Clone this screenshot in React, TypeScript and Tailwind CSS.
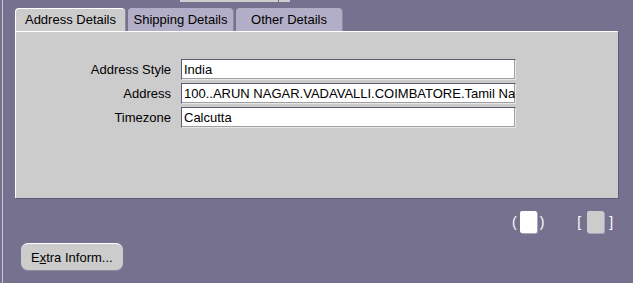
import React from "react";

const tabs = [
  { label: "Address Details", width: "w-[110px]", active: true },
  { label: "Shipping Details", width: "w-[105px]", active: false },
  { label: "Other Details", width: "w-[106px]", active: false },
];

const fields = [
  { label: "Address Style", value: "India" },
  { label: "Address", value: "100..ARUN NAGAR.VADAVALLI.COIMBATORE.Tamil Nadu" },
  { label: "Timezone", value: "Calcutta" },
];

export default function App() {
  return (
    <div className="h-[283px] w-[633px] overflow-hidden bg-[#777190] pl-[2px] font-['Liberation_Sans',Arial,sans-serif] text-[13px] text-black">
      <div className="flex h-full flex-col border-l border-[#c9c7d2]">
        {/* cut-off control from the region above */}
        <div className="flex h-[2px]">
          <div className="ml-[177px] w-[98px] bg-[#cfcfcf]" />
          <div className="ml-px w-[11px] bg-[#cfcfcf]" />
        </div>

        <div className="ml-[12px] mt-[6px] flex h-[23px] items-end gap-[3px]">
          {tabs.map((tab) => (
            <div
              key={tab.label}
              className={`flex h-[23px] ${tab.width} items-center justify-center rounded-t-[4px] pb-px leading-none ${
                tab.active
                  ? "border-l border-t border-white bg-[#cccccc] shadow-[1px_0_0_#8e8a9f]"
                  : "mt-px bg-[#b3aec7] shadow-[1px_0_0_#8e8a9f]"
              }`}
            >
              {tab.label}
            </div>
          ))}
        </div>

        <div className="ml-[12px] h-[167px] w-[603px] border-l border-t border-white bg-[#cccccc] shadow-[1px_1px_0_#5f5a75]">
          <div className="mt-[27px] grid grid-cols-[155px_335px] gap-x-[10px] gap-y-[3px]">
            {fields.map((field) => (
              <React.Fragment key={field.label}>
                <div className="flex h-[21px] items-center justify-end leading-none">{field.label}</div>
                <div className="flex h-[21px] items-center overflow-hidden whitespace-nowrap border-b border-l border-r border-t border-b-[#e6e6e6] border-l-[#5e587a] border-r-[#e6e6e6] border-t-[#5e587a] bg-white pl-[2px] leading-none shadow-[inset_-1px_-1px_0_#9f9f9f]">
                  {field.value}
                </div>
              </React.Fragment>
            ))}
          </div>
        </div>

        <div className="mt-[13px] flex h-[22px] items-center text-white">
          <span className="ml-[509px] text-[14px] leading-none">(</span>
          <div className="ml-[3px] h-[22px] w-[17px] rounded-[2px] bg-white shadow-[1px_1px_0_#a9a5bb]" />
          <span className="ml-[3px] text-[14px] leading-none">)</span>
          <span className="ml-[33px] text-[14px] leading-none">[</span>
          <div className="ml-[6px] h-[22px] w-[17px] rounded-[2px] bg-[#cccccc] shadow-[1px_1px_0_#a9a5bb]" />
          <span className="ml-[5px] text-[14px] leading-none">]</span>
        </div>

        <div className="ml-[18px] mt-[10px]">
          <button
            type="button"
            className="flex h-[27px] w-[102px] items-center rounded-[7px] border-t border-white bg-[#cccccc] pl-[10px] leading-none shadow-[0_1px_0_#8e8a9f]"
          >
            E<span className="underline">x</span>tra Inform...
          </button>
        </div>
      </div>
    </div>
  );
}
